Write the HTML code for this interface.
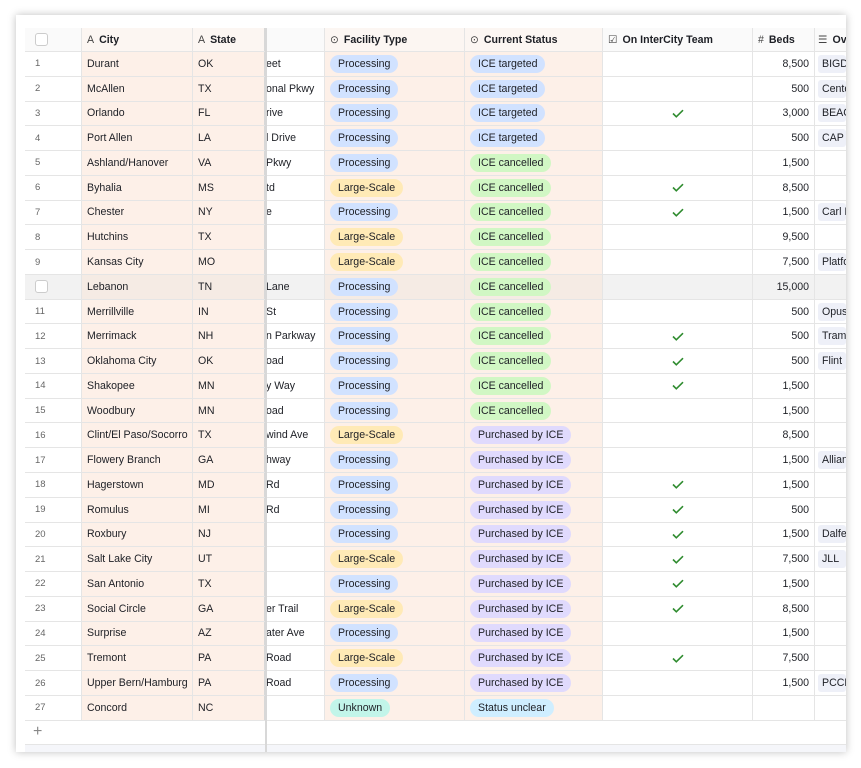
<!DOCTYPE html>
<html><head><meta charset="utf-8"><style>
*{box-sizing:border-box;margin:0;padding:0}
body{width:861px;height:768px;background:#fff;font-family:"Liberation Sans",sans-serif;font-size:10.6px;color:#1d1f25;overflow:hidden;position:relative}
.card{position:absolute;left:16px;top:15px;width:830px;height:737px;background:#fff;box-shadow:0 0 8px rgba(0,0,0,.25);overflow:hidden}
.tbl{position:absolute;left:9px;top:13px;width:821px}
.r{display:flex;height:24.77px;border-bottom:1px solid #e5e5e5}
.h{height:24px;background:#fafafa;font-weight:bold;font-size:10.6px}
.c{flex:none;display:flex;align-items:center;padding:0 5px;border-right:1px solid #e5e5e5;white-space:nowrap;overflow:hidden}
.n{width:57px;color:#666;font-size:9.5px;padding-left:10px}
.ci{width:111px;background:#fdf0e8}
.st{width:72px;background:#fdf0e8;border-right:1.5px solid #d8d8d8}
.ad{width:60px;padding-left:1px}
.f{width:140px;background:#fdf0e8}
.s{width:138px;background:#fdf0e8}
.o{width:150px;justify-content:center}
.b{width:62px;justify-content:flex-end}
.w{width:31px;border-right:none;padding:0 0 0 3px}
.h .ci,.h .st,.h .f,.h .s{background:#fcf6f2}
.p{display:inline-block;padding:3px 8px;border-radius:10px;font-size:10.6px}
.P{background:#d1e2ff}.L{background:#ffeab6}.T{background:#d1e2ff}.C{background:#d1f7c4}.U{background:#e0dafd}.K{background:#c2f5e9}.Q{background:#cfeeff}
.ow{background:#eef0f8;padding:3px 4px;border-radius:3px;width:100%}
.hl .c{background:#f2f2f2}.hl .ci,.hl .st,.hl .f,.hl .s{background:#f5ebe4}
.cb{width:13px;height:13px;border:1px solid #ccc;border-radius:3px;background:#fff}
.ic{margin-right:5px;font-weight:normal;color:#444}
.add{height:24px;display:flex;align-items:center;padding-left:8px;font-size:16px;color:#888;border-bottom:1px solid #e5e5e5}
.foot{height:8px;background:#f5f6fa}
.vl{position:absolute;left:249px;top:13px;width:1.5px;height:730px;background:#d8d8d8}
.k{width:12px;height:9px}
</style></head><body>
<svg width="0" height="0" style="position:absolute"><symbol id="ck" viewBox="0 0 12 9"><path d="M1 4.5 L4.3 7.8 L11 1.2" fill="none" stroke="#2e8b2e" stroke-width="1.6"/></symbol></svg>
<div class="card"><div class="tbl">
<div class="r h"><div class="c n"><span class="cb"></span></div><div class="c ci"><span class="ic">A</span>City</div><div class="c st"><span class="ic">A</span>State</div><div class="c ad"></div><div class="c f"><span class="ic">⊙</span>Facility Type</div><div class="c s"><span class="ic">⊙</span>Current Status</div><div class="c o" style="justify-content:flex-start"><span class="ic">☑</span>On InterCity Team</div><div class="c b" style="justify-content:flex-start"><span class="ic">#</span>Beds</div><div class="c w"><span class="ic">☰</span>Ov</div></div>
<div class="r"><div class="c n">1</div><div class="c ci">Durant</div><div class="c st">OK</div><div class="c ad">eet</div><div class="c f"><span class="p P">Processing</span></div><div class="c s"><span class="p T">ICE targeted</span></div><div class="c o"></div><div class="c b">8,500</div><div class="c w"><span class="ow">BIGD</span></div></div>
<div class="r"><div class="c n">2</div><div class="c ci">McAllen</div><div class="c st">TX</div><div class="c ad">onal Pkwy</div><div class="c f"><span class="p P">Processing</span></div><div class="c s"><span class="p T">ICE targeted</span></div><div class="c o"></div><div class="c b">500</div><div class="c w"><span class="ow">Cente</span></div></div>
<div class="r"><div class="c n">3</div><div class="c ci">Orlando</div><div class="c st">FL</div><div class="c ad">rive</div><div class="c f"><span class="p P">Processing</span></div><div class="c s"><span class="p T">ICE targeted</span></div><div class="c o"><svg class="k"><use href="#ck"/></svg></div><div class="c b">3,000</div><div class="c w"><span class="ow">BEAC</span></div></div>
<div class="r"><div class="c n">4</div><div class="c ci">Port Allen</div><div class="c st">LA</div><div class="c ad">l Drive</div><div class="c f"><span class="p P">Processing</span></div><div class="c s"><span class="p T">ICE targeted</span></div><div class="c o"></div><div class="c b">500</div><div class="c w"><span class="ow">CAP I</span></div></div>
<div class="r"><div class="c n">5</div><div class="c ci">Ashland/Hanover</div><div class="c st">VA</div><div class="c ad">Pkwy</div><div class="c f"><span class="p P">Processing</span></div><div class="c s"><span class="p C">ICE cancelled</span></div><div class="c o"></div><div class="c b">1,500</div><div class="c w"></div></div>
<div class="r"><div class="c n">6</div><div class="c ci">Byhalia</div><div class="c st">MS</div><div class="c ad">td</div><div class="c f"><span class="p L">Large-Scale</span></div><div class="c s"><span class="p C">ICE cancelled</span></div><div class="c o"><svg class="k"><use href="#ck"/></svg></div><div class="c b">8,500</div><div class="c w"></div></div>
<div class="r"><div class="c n">7</div><div class="c ci">Chester</div><div class="c st">NY</div><div class="c ad">e</div><div class="c f"><span class="p P">Processing</span></div><div class="c s"><span class="p C">ICE cancelled</span></div><div class="c o"><svg class="k"><use href="#ck"/></svg></div><div class="c b">1,500</div><div class="c w"><span class="ow">Carl I</span></div></div>
<div class="r"><div class="c n">8</div><div class="c ci">Hutchins</div><div class="c st">TX</div><div class="c ad"></div><div class="c f"><span class="p L">Large-Scale</span></div><div class="c s"><span class="p C">ICE cancelled</span></div><div class="c o"></div><div class="c b">9,500</div><div class="c w"></div></div>
<div class="r"><div class="c n">9</div><div class="c ci">Kansas City</div><div class="c st">MO</div><div class="c ad"></div><div class="c f"><span class="p L">Large-Scale</span></div><div class="c s"><span class="p C">ICE cancelled</span></div><div class="c o"></div><div class="c b">7,500</div><div class="c w"><span class="ow">Platfo</span></div></div>
<div class="r hl"><div class="c n"><span class="cb"></span></div><div class="c ci">Lebanon</div><div class="c st">TN</div><div class="c ad">Lane</div><div class="c f"><span class="p P">Processing</span></div><div class="c s"><span class="p C">ICE cancelled</span></div><div class="c o"></div><div class="c b">15,000</div><div class="c w"></div></div>
<div class="r"><div class="c n">11</div><div class="c ci">Merrillville</div><div class="c st">IN</div><div class="c ad">St</div><div class="c f"><span class="p P">Processing</span></div><div class="c s"><span class="p C">ICE cancelled</span></div><div class="c o"></div><div class="c b">500</div><div class="c w"><span class="ow">Opus</span></div></div>
<div class="r"><div class="c n">12</div><div class="c ci">Merrimack</div><div class="c st">NH</div><div class="c ad">n Parkway</div><div class="c f"><span class="p P">Processing</span></div><div class="c s"><span class="p C">ICE cancelled</span></div><div class="c o"><svg class="k"><use href="#ck"/></svg></div><div class="c b">500</div><div class="c w"><span class="ow">Tram</span></div></div>
<div class="r"><div class="c n">13</div><div class="c ci">Oklahoma City</div><div class="c st">OK</div><div class="c ad">oad</div><div class="c f"><span class="p P">Processing</span></div><div class="c s"><span class="p C">ICE cancelled</span></div><div class="c o"><svg class="k"><use href="#ck"/></svg></div><div class="c b">500</div><div class="c w"><span class="ow">Flint</span></div></div>
<div class="r"><div class="c n">14</div><div class="c ci">Shakopee</div><div class="c st">MN</div><div class="c ad">y Way</div><div class="c f"><span class="p P">Processing</span></div><div class="c s"><span class="p C">ICE cancelled</span></div><div class="c o"><svg class="k"><use href="#ck"/></svg></div><div class="c b">1,500</div><div class="c w"></div></div>
<div class="r"><div class="c n">15</div><div class="c ci">Woodbury</div><div class="c st">MN</div><div class="c ad">oad</div><div class="c f"><span class="p P">Processing</span></div><div class="c s"><span class="p C">ICE cancelled</span></div><div class="c o"></div><div class="c b">1,500</div><div class="c w"></div></div>
<div class="r"><div class="c n">16</div><div class="c ci">Clint/El Paso/Socorro</div><div class="c st">TX</div><div class="c ad">wind Ave</div><div class="c f"><span class="p L">Large-Scale</span></div><div class="c s"><span class="p U">Purchased by ICE</span></div><div class="c o"></div><div class="c b">8,500</div><div class="c w"></div></div>
<div class="r"><div class="c n">17</div><div class="c ci">Flowery Branch</div><div class="c st">GA</div><div class="c ad">hway</div><div class="c f"><span class="p P">Processing</span></div><div class="c s"><span class="p U">Purchased by ICE</span></div><div class="c o"></div><div class="c b">1,500</div><div class="c w"><span class="ow">Allian</span></div></div>
<div class="r"><div class="c n">18</div><div class="c ci">Hagerstown</div><div class="c st">MD</div><div class="c ad">Rd</div><div class="c f"><span class="p P">Processing</span></div><div class="c s"><span class="p U">Purchased by ICE</span></div><div class="c o"><svg class="k"><use href="#ck"/></svg></div><div class="c b">1,500</div><div class="c w"></div></div>
<div class="r"><div class="c n">19</div><div class="c ci">Romulus</div><div class="c st">MI</div><div class="c ad">Rd</div><div class="c f"><span class="p P">Processing</span></div><div class="c s"><span class="p U">Purchased by ICE</span></div><div class="c o"><svg class="k"><use href="#ck"/></svg></div><div class="c b">500</div><div class="c w"></div></div>
<div class="r"><div class="c n">20</div><div class="c ci">Roxbury</div><div class="c st">NJ</div><div class="c ad"></div><div class="c f"><span class="p P">Processing</span></div><div class="c s"><span class="p U">Purchased by ICE</span></div><div class="c o"><svg class="k"><use href="#ck"/></svg></div><div class="c b">1,500</div><div class="c w"><span class="ow">Dalfe</span></div></div>
<div class="r"><div class="c n">21</div><div class="c ci">Salt Lake City</div><div class="c st">UT</div><div class="c ad"></div><div class="c f"><span class="p L">Large-Scale</span></div><div class="c s"><span class="p U">Purchased by ICE</span></div><div class="c o"><svg class="k"><use href="#ck"/></svg></div><div class="c b">7,500</div><div class="c w"><span class="ow">JLL</span></div></div>
<div class="r"><div class="c n">22</div><div class="c ci">San Antonio</div><div class="c st">TX</div><div class="c ad"></div><div class="c f"><span class="p P">Processing</span></div><div class="c s"><span class="p U">Purchased by ICE</span></div><div class="c o"><svg class="k"><use href="#ck"/></svg></div><div class="c b">1,500</div><div class="c w"></div></div>
<div class="r"><div class="c n">23</div><div class="c ci">Social Circle</div><div class="c st">GA</div><div class="c ad">er Trail</div><div class="c f"><span class="p L">Large-Scale</span></div><div class="c s"><span class="p U">Purchased by ICE</span></div><div class="c o"><svg class="k"><use href="#ck"/></svg></div><div class="c b">8,500</div><div class="c w"></div></div>
<div class="r"><div class="c n">24</div><div class="c ci">Surprise</div><div class="c st">AZ</div><div class="c ad">ater Ave</div><div class="c f"><span class="p P">Processing</span></div><div class="c s"><span class="p U">Purchased by ICE</span></div><div class="c o"></div><div class="c b">1,500</div><div class="c w"></div></div>
<div class="r"><div class="c n">25</div><div class="c ci">Tremont</div><div class="c st">PA</div><div class="c ad">Road</div><div class="c f"><span class="p L">Large-Scale</span></div><div class="c s"><span class="p U">Purchased by ICE</span></div><div class="c o"><svg class="k"><use href="#ck"/></svg></div><div class="c b">7,500</div><div class="c w"></div></div>
<div class="r"><div class="c n">26</div><div class="c ci">Upper Bern/Hamburg</div><div class="c st">PA</div><div class="c ad">Road</div><div class="c f"><span class="p P">Processing</span></div><div class="c s"><span class="p U">Purchased by ICE</span></div><div class="c o"></div><div class="c b">1,500</div><div class="c w"><span class="ow">PCCP</span></div></div>
<div class="r"><div class="c n">27</div><div class="c ci">Concord</div><div class="c st">NC</div><div class="c ad"></div><div class="c f"><span class="p K">Unknown</span></div><div class="c s"><span class="p Q">Status unclear</span></div><div class="c o"></div><div class="c b"></div><div class="c w"></div></div>
<div class="add">+</div><div class="foot"></div>
</div><div class="vl"></div></div></body></html>
